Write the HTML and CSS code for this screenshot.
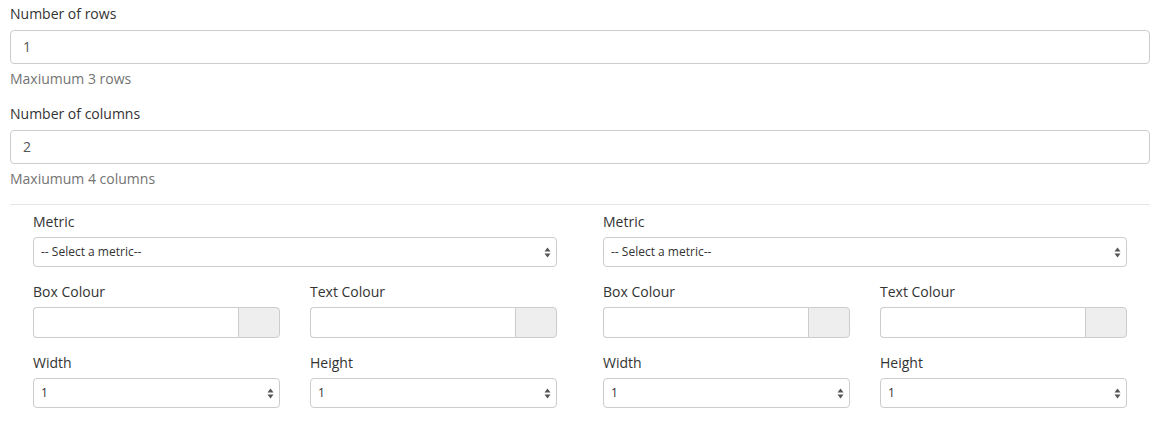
FILE: index.html
```html
<!DOCTYPE html>
<html>
<head>
<meta charset="utf-8">
<link rel="stylesheet" href="styles.css">
</head>
<body>
<div class="page">
  <div class="group">
    <label class="lbl">Number of rows</label>
    <div class="input big">1</div>
    <div class="help">Maxiumum 3 rows</div>
  </div>
  <div class="group">
    <label class="lbl">Number of columns</label>
    <div class="input big">2</div>
    <div class="help">Maxiumum 4 columns</div>
  </div>
  <hr class="rule">
  <div class="cols">
    <div class="col">
      <div class="sub-group">
        <label class="lbl">Metric</label>
        <div class="select"><span>-- Select a metric--</span><svg class="arrows" width="7" height="11" viewBox="0 0 7 11"><path d="M3.5 0.5 L6.5 4.5 H0.5 Z M3.5 10.5 L6.5 6.5 H0.5 Z" fill="#555"/></svg></div>
      </div>
      <div class="pair">
        <div class="sub-group">
          <label class="lbl">Box Colour</label>
          <div class="igroup"><div class="ifield"></div><div class="addon"></div></div>
        </div>
        <div class="sub-group">
          <label class="lbl">Text Colour</label>
          <div class="igroup"><div class="ifield"></div><div class="addon"></div></div>
        </div>
      </div>
      <div class="pair">
        <div class="sub-group">
          <label class="lbl">Width</label>
          <div class="select"><span>1</span><svg class="arrows" width="7" height="11" viewBox="0 0 7 11"><path d="M3.5 0.5 L6.5 4.5 H0.5 Z M3.5 10.5 L6.5 6.5 H0.5 Z" fill="#555"/></svg></div>
        </div>
        <div class="sub-group">
          <label class="lbl">Height</label>
          <div class="select"><span>1</span><svg class="arrows" width="7" height="11" viewBox="0 0 7 11"><path d="M3.5 0.5 L6.5 4.5 H0.5 Z M3.5 10.5 L6.5 6.5 H0.5 Z" fill="#555"/></svg></div>
        </div>
      </div>
    </div>
    <div class="col">
      <div class="sub-group">
        <label class="lbl">Metric</label>
        <div class="select"><span>-- Select a metric--</span><svg class="arrows" width="7" height="11" viewBox="0 0 7 11"><path d="M3.5 0.5 L6.5 4.5 H0.5 Z M3.5 10.5 L6.5 6.5 H0.5 Z" fill="#555"/></svg></div>
      </div>
      <div class="pair">
        <div class="sub-group">
          <label class="lbl">Box Colour</label>
          <div class="igroup"><div class="ifield"></div><div class="addon"></div></div>
        </div>
        <div class="sub-group">
          <label class="lbl">Text Colour</label>
          <div class="igroup"><div class="ifield"></div><div class="addon"></div></div>
        </div>
      </div>
      <div class="pair">
        <div class="sub-group">
          <label class="lbl">Width</label>
          <div class="select"><span>1</span><svg class="arrows" width="7" height="11" viewBox="0 0 7 11"><path d="M3.5 0.5 L6.5 4.5 H0.5 Z M3.5 10.5 L6.5 6.5 H0.5 Z" fill="#555"/></svg></div>
        </div>
        <div class="sub-group">
          <label class="lbl">Height</label>
          <div class="select"><span>1</span><svg class="arrows" width="7" height="11" viewBox="0 0 7 11"><path d="M3.5 0.5 L6.5 4.5 H0.5 Z M3.5 10.5 L6.5 6.5 H0.5 Z" fill="#555"/></svg></div>
        </div>
      </div>
    </div>
  </div>
</div>
</body>
</html>
```
FILE: styles.css
```css
* { box-sizing: border-box; }
html, body { margin: 0; padding: 0; background: #fff; }
body {
  font-family: "Open Sans", "Liberation Sans", sans-serif;
  font-size: 14px;
  line-height: 20px;
  color: #333;
}
.page { padding: 4px 13px 0 10px; }
.group { margin-bottom: 15px; }
.lbl { display: block; margin-bottom: 6px; color: #333; }
.input {
  border: 1px solid #ccc;
  border-radius: 4px;
  background: #fff;
  color: #555;
}
.big { height: 34px; padding: 6px 12px; }
.help { margin-top: 5px; color: #737373; }
.rule { border: 0; border-top: 1px solid #e5e5e5; margin: 13px 0 7px; }
.cols { display: flex; }
.col { flex: 1 1 0; padding: 0 23px; }
.sub-group { margin-bottom: 15px; flex: 1 1 0; }
.sub-group .lbl { margin-bottom: 5px; }
.pair { display: flex; gap: 30px; }
.select {
  position: relative;
  height: 30px;
  border: 1px solid #ccc;
  border-radius: 4px;
  background: #fff;
  font-size: 12px;
  line-height: 28px;
  padding: 0 7px;
  color: #333;
}
.arrows { position: absolute; right: 5px; top: 9px; }
.igroup { display: flex; height: 31px; }
.ifield {
  flex: 1;
  border: 1px solid #ccc;
  border-right: 0;
  border-radius: 4px 0 0 4px;
  background: #fff;
}
.addon {
  width: 42px;
  border: 1px solid #ccc;
  border-radius: 0 4px 4px 0;
  background: #eee;
}
```
